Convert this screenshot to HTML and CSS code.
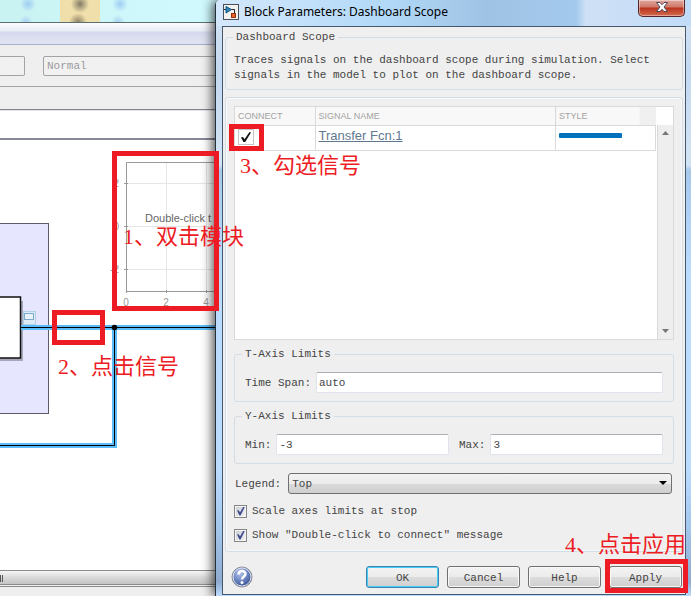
FILE: index.html
```html
<!DOCTYPE html>
<html lang="en">
<head>
<meta charset="utf-8">
<title>Block Parameters: Dashboard Scope</title>
<link rel="stylesheet" href="styles.css">
</head>
<body>
<main class="desktop">
  <section class="model" aria-label="Model window">
    <div class="backdrop"><i class="blob"></i><i class="blob blob-gold"></i><i class="blob"></i></div>
    <div class="model-title"></div>
    <div class="toolbar">
      <input class="tool-field" type="text" aria-label="Stop time" disabled>
      <select class="tool-mode" aria-label="Simulation mode" disabled><option>Normal</option></select>
    </div>
    <div class="tabbar"></div>
    <div class="pathbar"></div>
    <div class="canvas">
      <svg class="diagram" width="216" height="432" viewBox="0 140 216 432">
        <rect x="-5" y="223.500" width="53.500" height="190" fill="#e6e6ff" stroke="#5c5c66"/>
        <rect x="-5" y="301" width="28" height="60" fill="#8b8b9c" opacity=".7"/>
        <rect x="-5" y="297" width="25.500" height="61" fill="#fff" stroke="#111" stroke-width="1.500"/>
        <rect x="23.500" y="311.500" width="12" height="13" fill="#dcebf5" stroke="#b4d0e6"/>
        <rect x="24.500" y="313.500" width="9" height="6" fill="#e8f2f8" stroke="#7cabd0"/>
        <g fill="none">
          <path d="M21 327.500H216M114.500 327.500V445.500H0" stroke="#5bbcfb" stroke-width="5"/>
          <path d="M21 327.500H216M114.500 327.500V445.500H0" stroke="#000"/>
        </g>
        <circle cx="114.500" cy="327.500" r="2.800"/>
        <path d="M166.500 163V291M206.500 163V291M127 183.500H216M127 226.500H216M127 269.500H216" stroke="#e6e6e6"/>
        <path d="M216 162.500H126.500V291.500H216M124 183.500H128M124 226.500H128M124 269.500H128M126.500 290V293M166.500 290V293M206.500 290V293" fill="none" stroke="#999"/>
        <g class="tick">
          <text x="119" y="187" text-anchor="end">2</text>
          <text x="119" y="230" text-anchor="end">0</text>
          <text x="119" y="273" text-anchor="end">-2</text>
          <text x="126" y="306" text-anchor="middle">0</text>
          <text x="166" y="306" text-anchor="middle">2</text>
          <text x="206" y="306" text-anchor="middle">4</text>
        </g>
        <text class="hint" x="145" y="222">Double-click t</text>
      </svg>
    </div>
    <div class="splitter"><i></i><i></i></div>
    <div class="statusbar"></div>
  </section>

  <section class="dialog" aria-label="Block Parameters">
    <header class="titlebar">
      <svg class="app-icon" width="16" height="16" viewBox="0 0 16 16" aria-hidden="true">
        <rect x=".5" y=".5" width="15" height="15" fill="#f4f2ef" stroke="#4b4f57"/>
        <path d="M1 5.500H3M8 5.500H11.500V10" fill="none" stroke="#223"/>
        <path d="M3 2.500L8.500 5.500L3 9Z" fill="#2d86b8" stroke="#14557f"/>
        <rect x="8.500" y="9.500" width="4" height="4" fill="#e6602b" stroke="#98320f"/>
      </svg>
      <h1>Block Parameters: Dashboard Scope</h1>
      <button class="close" type="button" aria-label="Close">
        <svg width="12" height="10" viewBox="0 0 12 10"><path d="M.5.500H4L6 2.700L8 .5H11.500L8 5L11.500 9.500H8L6 7.300L4 9.500H.5L4 5Z" fill="#fff" stroke="#4b4657"/></svg>
      </button>
    </header>
    <form class="client">
      <fieldset class="group intro">
        <legend>Dashboard Scope</legend>
        <p>Traces signals on the dashboard scope during simulation. Select signals in the model to plot on the dashboard scope.</p>
      </fieldset>

      <div class="group params">
        <div class="signals">
          <table>
            <colgroup><col class="col-connect"><col><col class="col-style"></colgroup>
            <thead><tr><th>CONNECT</th><th>SIGNAL NAME</th><th>STYLE</th></tr></thead>
            <tbody><tr>
              <td><input class="connect" type="checkbox" aria-label="Connect Transfer Fcn:1" checked></td>
              <td><a href="#signal">Transfer Fcn:1</a></td>
              <td><span class="line-style"></span></td>
            </tr></tbody>
          </table>
          <div class="scrollbar"><i class="arrow up"></i><i class="arrow"></i></div>
        </div>

        <fieldset class="group axis">
          <legend>T-Axis Limits</legend>
          <div class="fields">
            <label for="span">Time Span:</label><input id="span" type="text" value="auto">
          </div>
        </fieldset>
        <fieldset class="group axis">
          <legend>Y-Axis Limits</legend>
          <div class="fields">
            <label for="min">Min:</label><input id="min" type="text" value="-3">
            <label class="max" for="max">Max:</label><input id="max" type="text" value="3">
          </div>
        </fieldset>

        <div class="legend-row">
          <label for="legend">Legend:</label>
          <div class="drop"><select id="legend"><option>Top</option></select></div>
        </div>
        <div class="checks">
          <label><input type="checkbox" checked>Scale axes limits at stop</label>
          <label><input type="checkbox" checked>Show "Double-click to connect" message</label>
        </div>
      </div>

      <footer class="actions">
        <svg class="help" width="22" height="22" viewBox="0 0 22 22" aria-hidden="true">
          <defs><radialGradient id="ball" cx=".4" cy=".3" r=".75"><stop offset="0" stop-color="#b4c5ea"/><stop offset=".5" stop-color="#6f88c5"/><stop offset="1" stop-color="#2d4585"/></radialGradient></defs>
          <circle cx="11" cy="11" r="10" fill="url(#ball)" stroke="#8c8c94"/>
          <circle cx="11" cy="11" r="9" fill="none" stroke="#dfe5f2"/>
          <path d="M7.500 8.500C7.500 4 14.500 4 14.500 8C14.500 10.500 11 10.500 11 13.500" fill="none" stroke="#fff" stroke-width="2.400"/>
          <circle cx="11" cy="16.500" r="1.500" fill="#fff"/>
        </svg>
        <button class="default" type="button">OK</button>
        <button type="button">Cancel</button>
        <button type="button">Help</button>
        <button type="button">Apply</button>
      </footer>
    </form>
  </section>

  <div class="mark mark-scope"></div>
  <div class="mark mark-signal"></div>
  <div class="mark mark-connect"></div>
  <div class="mark mark-apply"></div>
  <div class="note note-scope">1、双击模块</div>
  <div class="note note-signal">2、点击信号</div>
  <div class="note note-connect">3、勾选信号</div>
  <div class="note note-apply">4、点击应用</div>
</main>
</body>
</html>
```
FILE: styles.css
```css
* { box-sizing: border-box; }
body { margin: 0; }
.desktop {
  position: relative;
  height: 100vh;
  min-height: 596px;
  overflow: hidden;
  color: #444;
  font: 11px/14px "Liberation Mono", monospace;
}
input, select, button { margin: 0; font: inherit; color: inherit; }

/* Model window */
.model { display: flex; flex-direction: column; height: 100%; background: #efefef; }
.backdrop {
  display: flex;
  height: 23px;
  padding-left: 8px;
  overflow: hidden;
  background: linear-gradient(90deg, #c9f3f2, #d0faff 216px);
  border-bottom: 1px solid #59706f;
}
.blob { width: 40px; background: radial-gradient(circle at 20px 4px, #a0cdf4, transparent 8px), radial-gradient(circle at 18px 22px, #a9cff1, transparent 7px); }
.blob-gold { margin-left: 12px; background: radial-gradient(circle at 20px 4px, #837b67, transparent 9px), radial-gradient(circle at 18px 22px, #8f8164, transparent 9px), #f0dfab; }
.model-title { height: 22px; background: linear-gradient(#fbfcff, #e9ecf6 8px, #d6daee 9px, #e1e4f3); border-bottom: 1px solid #a8b0cc; }
.toolbar { display: flex; gap: 18px; height: 42px; padding: 11px 0 10px; border-bottom: 1px solid #a3a3a3; }
.tool-field, .tool-mode { height: 20px; border: 1px solid #a3a3a3; border-radius: 2px; background: #f1f1f1; }
.tool-field { width: 26px; margin-left: -1px; border-left: 0; }
.tool-mode { flex: 1; appearance: none; padding: 0 3px; color: #9b9ba0; opacity: 1; }
.tabbar { height: 23px; border-bottom: 1px solid #80838f; }
.pathbar { height: 30px; background: #fff; border-top: 1px solid #e6e6e6; border-bottom: 2px solid #858895; }
.canvas { flex: 1; min-height: 0; overflow: hidden; background: #fff; }
.diagram { display: block; }
.tick { font: 10px "Liberation Sans", sans-serif; fill: #999; }
.hint { font: 11px "Liberation Sans", sans-serif; fill: #666; }
.splitter {
  display: flex;
  gap: 1px;
  height: 15px;
  padding-top: 4px;
  background: linear-gradient(#f6f6f6, #d9d9d9 50%, #c4c5c7);
  border-top: 1px solid #8c8c8c;
  border-bottom: 1px solid #8c8c8c;
}
.splitter i { width: 1px; height: 7px; background: #555; }
.statusbar { height: 10px; border-top: 1px solid #8c8c8c; margin-top: 1px; }

/* Dialog */
.dialog {
  position: absolute;
  inset: 0 0 0 215px;
  display: flex;
  flex-direction: column;
  padding: 0 5px 1px 6px;
  border-left: 1px solid #263140;
  border-top-left-radius: 5px;
  background: linear-gradient(#d7e5f3, #c3d9f0 70px, #d3e4f4 165px, #a6c9ec 170px, #b9dcff 270px, #b9dcff 470px, #a3c6eb 530px, #8facd0 582px, #bcdcff);
  box-shadow: -2px 0 12px rgba(0, 0, 0, .75);
}
.titlebar {
  display: flex;
  align-items: flex-start;
  height: 26px;
  margin: 0 -5px 0 -6px;
  padding: 0 6px 0 7px;
  border-top-left-radius: 4px;
  background: linear-gradient(90deg, #d4e8fc, #b2d9f8 170px, #9fc3e4 270px, #a3c9ed 360px, #cfe1f6 370px, #c1dbf7);
}
.app-icon { margin-top: 4px; }
.titlebar h1 { flex: 1; margin: 0 0 0 5px; padding-top: 3px; font: 12px/17px "Noto Sans", sans-serif; color: #000; }
.close {
  display: grid;
  place-items: center;
  width: 47px;
  height: 17px;
  padding: 0 0 2px;
  border: 1px solid #54282a;
  border-top: 0;
  border-radius: 0 0 5px 5px;
  background: linear-gradient(#e0aaa0, #cf7766 7px, #b9331e 8px, #d46a4d);
  box-shadow: inset 0 0 0 1px rgba(255, 255, 255, .4);
}
.client {
  flex: 1;
  display: flex;
  flex-direction: column;
  padding: 3px 2px 0;
  border: 1px solid #46586f;
  background: #efefef;
}
.group { min-width: 0; margin: 0; border: 1px solid #d3dde6; border-radius: 3px; box-shadow: inset 0 0 0 1px rgba(255, 255, 255, .5); }
.group legend { margin-left: 7px; padding: 0 3px; line-height: 14px; }
.intro { padding: 9px 8px 6px; box-shadow: none; }
.intro legend { margin-left: -1px; }
.intro p { margin: 0; line-height: 15px; }
.params { display: flex; flex-direction: column; gap: 7px; margin-top: 7px; padding: 8px 8px 4px; }
.signals { display: flex; align-items: stretch; height: 234px; border: 1px solid #dadada; background: #fff; font-family: "Liberation Sans", sans-serif; }
.signals table { flex: 1; align-self: flex-start; table-layout: fixed; border-collapse: collapse; }
.col-connect { width: 80px; }
.col-style { width: 100px; }
th, td { padding: 0 3px; border: 1px solid #dadada; text-align: left; }
tr > :first-child { border-left: 0; }
th { height: 18px; border-top: 0; background: #f8f8f8; font-size: 9px; line-height: 16px; font-weight: 400; color: #a3a3a3; }
th:last-child { border-right: 0; background: linear-gradient(270deg, #f0f0f0 17px, #f8f8f8 17px); }
td { height: 25px; padding-bottom: 4px; font-size: 13px; line-height: 16px; vertical-align: middle; }
td a { color: #5f7890; }
.connect { appearance: none; display: block; width: 16px; height: 16px; margin-top: 3px; border: 1px solid #c4c4c4; background: #fff; }
.connect::before { content: ""; display: block; width: 10px; height: 10px; margin: 2px; background: #111; clip-path: polygon(0 55%, 20% 50%, 35% 72%, 85% 0, 100% 6%, 42% 100%, 25% 100%); }
.line-style { display: block; width: 63px; height: 5px; border-radius: 1px; background: #0072bd; }
.scrollbar { display: flex; flex-direction: column; justify-content: space-between; align-items: center; width: 16px; margin: 18px 0 0 1px; padding: 6px 0; background: #eee; border-left: 1px solid #dadada; }
.arrow { width: 7px; height: 4px; background: #777; clip-path: polygon(0 0, 100% 0, 50% 100%); }
.arrow.up { clip-path: polygon(0 100%, 100% 100%, 50% 0); }
.axis { padding: 11px 10px 8px; box-shadow: none; }
.axis legend { margin-left: -3px; }
.fields { display: flex; align-items: center; }
.fields input { flex: 1; min-width: 0; height: 21px; margin-left: 5px; padding: 1px 2px 0; border: 1px solid #dfe4ec; border-top-color: #aaadb3; border-radius: 2px; background: #fff; }
.fields .max { margin-left: 10px; }
.legend-row { display: flex; align-items: center; margin: 2px 2px 0 1px; }
.legend-row label { margin-right: 7px; }
.drop { position: relative; flex: 1; }
.drop select { appearance: none; display: block; width: 100%; height: 21px; padding: 1px 3px 0; border: 1px solid #707070; border-radius: 3px; background: linear-gradient(#f3f3f3, #ebebeb 50%, #dadada 51%, #cfcfcf); }
.drop::after { content: ""; position: absolute; right: 5px; top: 8px; width: 8px; height: 4px; background: #000; clip-path: polygon(0 0, 100% 0, 50% 100%); }
.checks { display: flex; flex-direction: column; margin-top: -2px; }
.checks label { display: flex; align-items: center; gap: 5px; height: 24px; }
.checks input { appearance: none; width: 13px; height: 13px; border: 1px solid #858585; background: linear-gradient(135deg, #c9cdd2, #f4f4f4); box-shadow: inset 0 0 0 1px #f6f6f6; }
.checks input::before { content: ""; display: block; width: 8px; height: 9px; margin: 1px 2px; background: #3e4f92; clip-path: polygon(0 45%, 20% 42%, 38% 65%, 80% 0, 100% 0, 45% 100%, 30% 100%); }
.actions { display: flex; align-items: center; gap: 8px; margin-top: auto; padding: 12px 1px 6px 6px; }
.help { margin-right: auto; }
.actions button { width: 73px; height: 22px; padding: 1px 0 0; border: 1px solid #707070; border-radius: 3px; background: linear-gradient(#f3f3f3, #ebebeb 50%, #dcdcdc 51%, #cfcfcf); box-shadow: inset 0 0 0 1px #f8f8f8; }
.actions .default { border-color: #3b83b0; box-shadow: inset 0 0 0 1px #48cdf2; }

/* Callouts over the windows */
.mark { position: absolute; border: 5px solid #ed1c24; }
.mark-scope { left: 112px; top: 151px; width: 107px; height: 160px; }
.mark-signal { left: 52px; top: 310px; width: 53px; height: 35px; }
.mark-connect { left: 229px; top: 124px; width: 35px; height: 27px; }
.mark-apply { right: 3px; top: 559px; width: 83px; height: 34px; }
.note { position: absolute; color: #ed1c24; font: 22px/24px "Liberation Serif", "Noto Sans CJK SC", serif; white-space: nowrap; }
.note-scope { left: 123px; top: 225px; }
.note-signal { left: 58px; top: 355px; }
.note-connect { left: 240px; top: 154px; }
.note-apply { right: 5px; top: 533px; }
```
